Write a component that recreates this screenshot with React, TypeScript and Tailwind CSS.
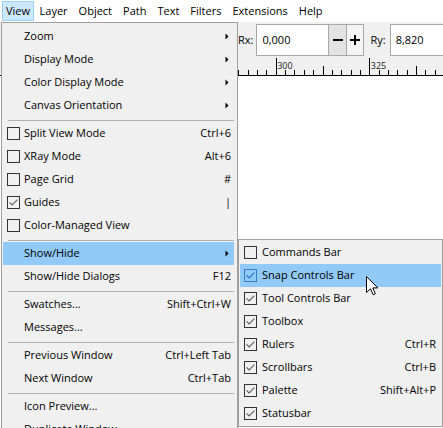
import React from 'react';

type Item =
  | 'sep'
  | {
      label: string;
      check?: boolean;
      shortcut?: string;
      arrow?: boolean;
      active?: boolean;
    };

const viewMenu: Item[] = [
  { label: 'Zoom', arrow: true },
  { label: 'Display Mode', arrow: true },
  { label: 'Color Display Mode', arrow: true },
  { label: 'Canvas Orientation', arrow: true },
  'sep',
  { label: 'Split View Mode', check: false, shortcut: 'Ctrl+6' },
  { label: 'XRay Mode', check: false, shortcut: 'Alt+6' },
  { label: 'Page Grid', check: false, shortcut: '#' },
  { label: 'Guides', check: true, shortcut: '|' },
  { label: 'Color-Managed View', check: false },
  'sep',
  { label: 'Show/Hide', arrow: true, active: true },
  { label: 'Show/Hide Dialogs', shortcut: 'F12' },
  'sep',
  { label: 'Swatches...', shortcut: 'Shift+Ctrl+W' },
  { label: 'Messages...' },
  'sep',
  { label: 'Previous Window', shortcut: 'Ctrl+Left Tab' },
  { label: 'Next Window', shortcut: 'Ctrl+Tab' },
  'sep',
  { label: 'Icon Preview...' },
  { label: 'Duplicate Window' },
];

const showHideMenu = [
  { label: 'Commands Bar', check: false },
  { label: 'Snap Controls Bar', check: true, active: true },
  { label: 'Tool Controls Bar', check: true },
  { label: 'Toolbox', check: true },
  { label: 'Rulers', check: true, shortcut: 'Ctrl+R' },
  { label: 'Scrollbars', check: true, shortcut: 'Ctrl+B' },
  { label: 'Palette', check: true, shortcut: 'Shift+Alt+P' },
  { label: 'Statusbar', check: true },
];

const menubar = ['Layer', 'Object', 'Path', 'Text', 'Filters', 'Extensions', 'Help'];

const CheckBox = ({ checked, hot }: { checked: boolean; hot?: boolean }) => (
  <svg width="13" height="13" viewBox="0 0 13 13" className="shrink-0">
    <rect x="0.5" y="0.5" width="12" height="12" fill="none" stroke={hot ? '#3a7fc6' : '#333333'} />
    {checked && (
      <path
        d="M2.6 6.4 L5.1 8.9 L10.4 3.6"
        fill="none"
        stroke={hot ? '#1a6bcc' : '#5c5c5c'}
        strokeWidth="1.1"
      />
    )}
  </svg>
);

const Arrow = () => (
  <svg width="4" height="7" viewBox="0 0 4 7" className="mr-[2px] shrink-0">
    <path d="M0.5 0.5 L3.5 3.5 L0.5 6.5 Z" fill="#000" />
  </svg>
);

const Ruler = () => {
  const ticks = [];
  for (let k = -30; k <= 18; k++) {
    const x = Math.round(275.7 + k * 9.36) + 0.5;
    const len = k % 10 === 0 ? 17 : k % 5 === 0 ? 9 : 5;
    ticks.push(<line key={k} x1={x} x2={x} y1={19 - len} y2={19} stroke="#000" strokeWidth="1" />);
  }
  const labels = [
    { x: 88.5, t: '250' },
    { x: 182.1, t: '275' },
    { x: 275.7, t: '300' },
    { x: 369.3, t: '325' },
  ];
  return (
    <svg width="443" height="20" className="block bg-[#f0f0f0]">
      {ticks}
      <rect x="0" y="19" width="443" height="1" fill="#000" />
      {labels.map((l) => (
        <text key={l.t} x={l.x + 1.5} y="12.5" fontSize="9" fill="#222" fontFamily="Open Sans, sans-serif">
          {l.t}
        </text>
      ))}
    </svg>
  );
};

export default function App() {
  return (
    <div className="relative h-[428px] w-[443px] overflow-hidden bg-white font-['Open_Sans','Noto_Sans',sans-serif] text-[11px] text-black">
      {/* menubar */}
      <div className="flex h-[22px] items-start bg-white pl-[2px] pt-[1px]">
        <div className="flex h-[20px] items-center border border-[#99d1ff] bg-[#cce8ff] px-[3px]">View</div>
        {menubar.map((m) => (
          <div key={m} className="flex h-[20px] items-center px-[5.5px]">
            {m}
          </div>
        ))}
      </div>

      {/* tool controls */}
      <div className="flex h-[34px] items-start bg-[#f0f0f0] pl-[238px] pt-[2px]">
        <div className="flex h-[32px] items-center pr-[3px]">Rx:</div>
        <div className="flex h-[32px] w-[73px] items-center border border-[#a8a8a8] bg-white pl-[5px]">0,000</div>
        <div className="flex h-[32px] w-[18px] items-center justify-center border-y border-r border-[#a8a8a8] bg-[#e3e3e3]">
          <svg width="10" height="2" viewBox="0 0 10 2">
            <rect width="10" height="2" fill="#000" />
          </svg>
        </div>
        <div className="flex h-[32px] w-[17px] items-center justify-center border-y border-r border-[#a8a8a8] bg-[#f5f5f5]">
          <svg width="10" height="10" viewBox="0 0 10 10">
            <rect x="0" y="4" width="10" height="2" fill="#000" />
            <rect x="4" y="0" width="2" height="10" fill="#000" />
          </svg>
        </div>
        <div className="ml-[6px] flex h-[32px] items-center pr-[4px]">Ry:</div>
        <div className="flex h-[32px] flex-1 items-center border border-r-0 border-[#a8a8a8] bg-white pl-[5px]">8,820</div>
      </div>

      <Ruler />
      <div className="h-[360px] bg-white" />

      {/* View menu */}
      <div className="absolute left-[1px] top-[22px] w-[237px] border border-[#a0a0a0] bg-[#f0f0f0] pl-[1px] pr-[3px] pt-[2px]">
        {viewMenu.map((it, i) =>
          it === 'sep' ? (
            <div key={i} className="h-[5px] pl-[5px] pt-[3px]">
              <div className="h-px bg-[#b0b0b0]" />
            </div>
          ) : (
            <div
              key={i}
              className={`flex h-[23px] items-center pl-[4px] pr-[3px] ${it.active ? 'bg-[#91c9f7]' : ''}`}
            >
              {it.check !== undefined ? <CheckBox checked={it.check} /> : <span className="w-[13px] shrink-0" />}
              <span className="ml-[4px] flex-1 whitespace-nowrap">{it.label}</span>
              {it.shortcut && <span className="whitespace-nowrap">{it.shortcut}</span>}
              {it.arrow && <Arrow />}
            </div>
          ),
        )}
      </div>

      {/* Show/Hide submenu */}
      <div className="absolute left-[238px] top-[239px] w-[205px] border border-[#a0a0a0] bg-[#f0f0f0] p-[1px]">
        {showHideMenu.map((it) => (
          <div
            key={it.label}
            className={`flex h-[23px] items-center pl-[4px] pr-[5px] ${it.active ? 'bg-[#91c9f7]' : ''}`}
          >
            <CheckBox checked={it.check} hot={it.active} />
            <span className="ml-[5px] flex-1 whitespace-nowrap">{it.label}</span>
            {it.shortcut && <span className="whitespace-nowrap">{it.shortcut}</span>}
          </div>
        ))}
      </div>

      {/* mouse pointer */}
      <svg width="13" height="20" viewBox="0 0 13 20" className="absolute left-[366px] top-[276px]">
        <path
          d="M0.5 0.5 L0.5 16.5 L4.5 12.8 L7.2 18.8 L9.4 17.8 L6.8 11.9 L11.8 11.9 Z"
          fill="#fff"
          stroke="#000"
          strokeWidth="1"
          strokeLinejoin="miter"
        />
      </svg>
    </div>
  );
}
